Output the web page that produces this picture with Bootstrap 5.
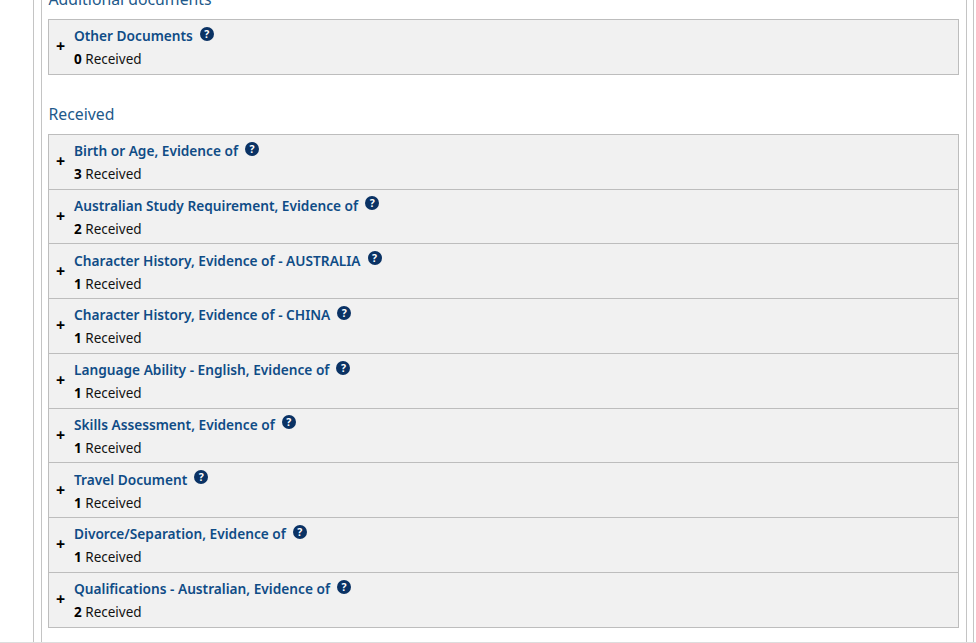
<!DOCTYPE html>
<html lang="en">
<head>
<meta charset="utf-8">
<title>Documents</title>
<link href="https://cdn.jsdelivr.net/npm/bootstrap@5.3.0/dist/css/bootstrap.min.css" rel="stylesheet">
<style>
html,body{height:643px;overflow:hidden;background:#fff}
body{font-family:"Noto Sans","Open Sans","Liberation Sans",sans-serif;font-size:13.5px;color:#111}
.page-shell{height:642px;border-bottom:1px solid #ddd;box-sizing:content-box;overflow:hidden;padding:0 2px 0 33px}
.outer-frame{height:642px;border-left:1px solid #c4c4c4;border-right:1px solid #c4c4c4;padding:0 6px 0 7px}
.inner-frame{display:flow-root;height:642px;border-left:1px solid #c4c4c4;border-right:1px solid #c4c4c4;padding:0 7px 0 6px}
.sect-title{font-size:15.8px;line-height:22px;font-weight:400;color:#22598a;margin:0 0 9px .5px}
.first-title{margin-top:-12px}
.second-title{margin-top:28px}
.doc-box{border:1px solid #bdbdbd;background:#f1f1f1}
.doc-row{height:54.75px;padding:2px 0 0 7px}
.doc-row:first-child{height:53.75px}
.doc-row+.doc-row{border-top:1px solid #bdbdbd}
.plus-mark{width:10px;font-size:16px;font-weight:700;line-height:1;color:#000;margin-right:8px;margin-top:-3px}
.doc-name{font-size:13.7px;font-weight:600;color:#0f4c86;line-height:19px}
.doc-count{line-height:19px;margin-top:5px}
.doc-count b{font-weight:700;color:#000}
.help-dot{width:14px;height:14px;border-radius:50%;background:#0a3264;color:#fff;font-size:10.5px;font-weight:700;line-height:14px;text-align:center;margin-left:7px;position:relative;top:-2px}
</style>
</head>
<body>
<div class="page-shell">
<div class="outer-frame">
<div class="inner-frame">
<h2 class="sect-title first-title">Additional documents</h2>
<div class="doc-box">
<div class="doc-row d-flex align-items-center"><span class="plus-mark">+</span><div><div class="doc-name d-flex align-items-center">Other Documents<span class="help-dot">?</span></div><div class="doc-count"><b>0</b> Received</div></div></div>
</div>
<h2 class="sect-title second-title">Received</h2>
<div class="doc-box">
<div class="doc-row d-flex align-items-center"><span class="plus-mark">+</span><div><div class="doc-name d-flex align-items-center">Birth or Age, Evidence of<span class="help-dot">?</span></div><div class="doc-count"><b>3</b> Received</div></div></div>
<div class="doc-row d-flex align-items-center"><span class="plus-mark">+</span><div><div class="doc-name d-flex align-items-center">Australian Study Requirement, Evidence of<span class="help-dot">?</span></div><div class="doc-count"><b>2</b> Received</div></div></div>
<div class="doc-row d-flex align-items-center"><span class="plus-mark">+</span><div><div class="doc-name d-flex align-items-center">Character History, Evidence of - AUSTRALIA<span class="help-dot">?</span></div><div class="doc-count"><b>1</b> Received</div></div></div>
<div class="doc-row d-flex align-items-center"><span class="plus-mark">+</span><div><div class="doc-name d-flex align-items-center">Character History, Evidence of - CHINA<span class="help-dot">?</span></div><div class="doc-count"><b>1</b> Received</div></div></div>
<div class="doc-row d-flex align-items-center"><span class="plus-mark">+</span><div><div class="doc-name d-flex align-items-center">Language Ability - English, Evidence of<span class="help-dot">?</span></div><div class="doc-count"><b>1</b> Received</div></div></div>
<div class="doc-row d-flex align-items-center"><span class="plus-mark">+</span><div><div class="doc-name d-flex align-items-center">Skills Assessment, Evidence of<span class="help-dot">?</span></div><div class="doc-count"><b>1</b> Received</div></div></div>
<div class="doc-row d-flex align-items-center"><span class="plus-mark">+</span><div><div class="doc-name d-flex align-items-center">Travel Document<span class="help-dot">?</span></div><div class="doc-count"><b>1</b> Received</div></div></div>
<div class="doc-row d-flex align-items-center"><span class="plus-mark">+</span><div><div class="doc-name d-flex align-items-center">Divorce/Separation, Evidence of<span class="help-dot">?</span></div><div class="doc-count"><b>1</b> Received</div></div></div>
<div class="doc-row d-flex align-items-center"><span class="plus-mark">+</span><div><div class="doc-name d-flex align-items-center">Qualifications - Australian, Evidence of<span class="help-dot">?</span></div><div class="doc-count"><b>2</b> Received</div></div></div>
</div>
</div>
</div>
</div>
<script src="https://cdn.jsdelivr.net/npm/bootstrap@5.3.0/dist/js/bootstrap.bundle.min.js"></script>
</body>
</html>
